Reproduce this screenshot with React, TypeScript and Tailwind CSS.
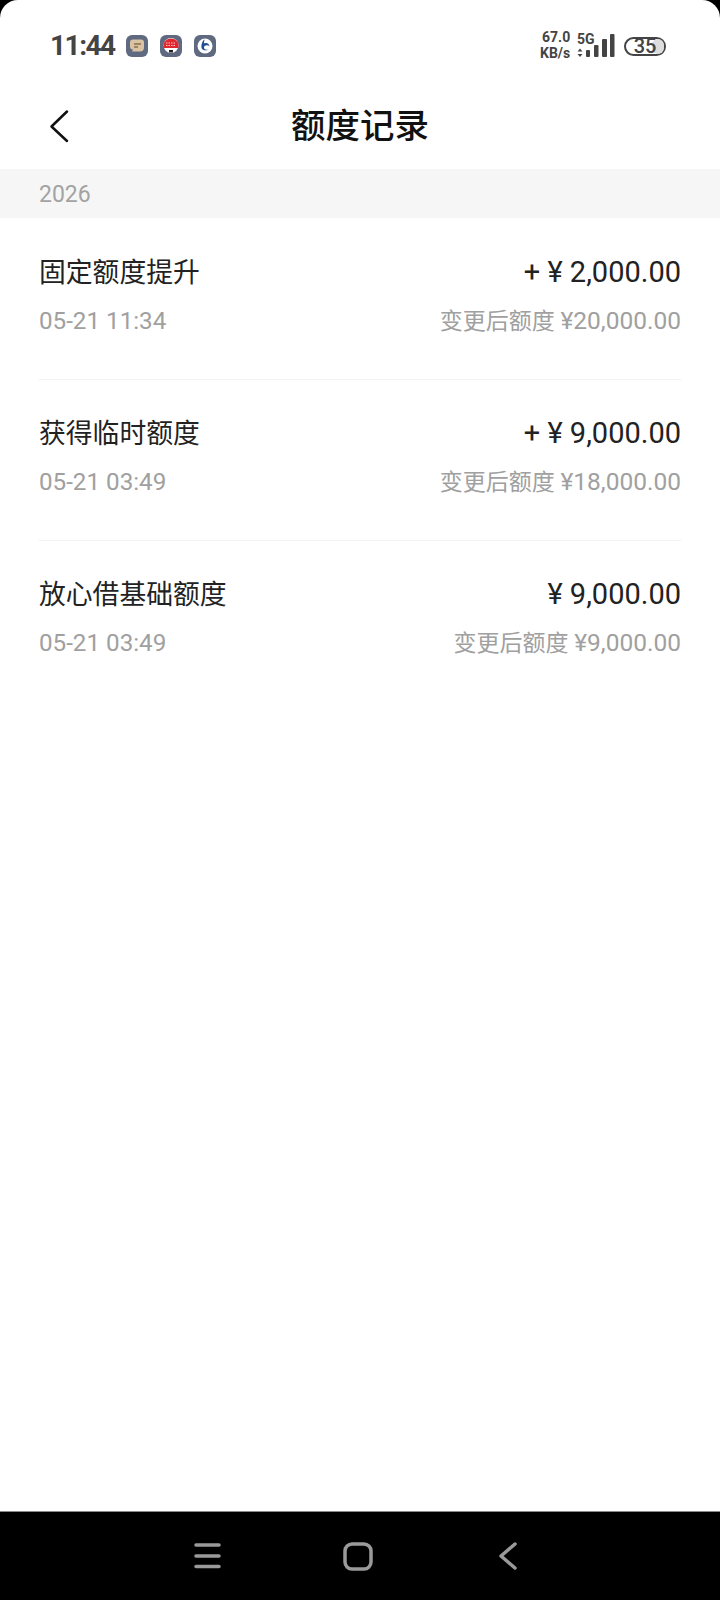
import React from 'react';

const records = [
  { title: '固定额度提升', time: '05-21 11:34', amount: '+ ¥ 2,000.00', after: '¥20,000.00' },
  { title: '获得临时额度', time: '05-21 03:49', amount: '+ ¥ 9,000.00', after: '¥18,000.00' },
  { title: '放心借基础额度', time: '05-21 03:49', amount: '¥ 9,000.00', after: '¥9,000.00' },
];

const NoteIcon = () => (
  <svg viewBox="0 0 22 22" className="w-[22px] h-[22px]">
    <rect width="22" height="22" rx="6" fill="#5f6980" />
    <path d="M7 4.500h8a3 3 0 0 1 3 3v5a4 4 0 0 1-4 4H6l1-2a3 3 0 0 1-3-3v-4a3 3 0 0 1 3-3z" fill="#d9c3a3" />
    <path d="M8 9h7M8 12h4" stroke="#8a6f4d" strokeWidth="1.5" />
  </svg>
);

const BadgeIcon = () => (
  <svg viewBox="0 0 22 22" className="w-[22px] h-[22px]">
    <rect width="22" height="22" rx="6" fill="#5f6980" />
    <circle cx="11" cy="10.500" r="7.500" fill="#ffffff" />
    <path d="M3.500 10a7.500 6.500 0 0 1 15 0v3h-15z" fill="#e3262e" />
    <path d="M6 8h10M6 10.500h10" stroke="#f8c9c9" strokeWidth="1" strokeDasharray="1.5 1" />
    <rect x="9" y="15" width="4" height="2.500" fill="#222222" />
  </svg>
);

const SwirlIcon = () => (
  <svg viewBox="0 0 22 22" className="w-[22px] h-[22px]">
    <rect width="22" height="22" rx="6" fill="#5f6980" />
    <circle cx="11" cy="11" r="7.500" fill="#ffffff" />
    <path d="M10 4.500C8 7 7 10 7.500 13c1 2.500 4.500 3 7 1.500-2.500.5-4.500 0-4.500-2 0-2 3-3 5.500-1.500C15 8.500 12.500 7.500 10 8.500c0-1.500.2-2.500.5-3.500z" fill="#1f4f93" />
  </svg>
);

const App: React.FC = () => {
  return (
    <div className="w-[720px] h-[1600px] bg-black flex flex-col font-['Roboto','Noto_Sans_CJK_SC',sans-serif]">
      <div className="flex-1 bg-white rounded-t-[18px] flex flex-col">
        {/* status bar */}
        <div className="h-[80px] pt-[26px] pl-[50px] pr-[54px] flex items-start justify-between">
          <div className="flex items-center h-[40px]">
            <span className="text-[28px] leading-none font-bold text-[#444444] tracking-[-1.5px] w-[76px]">11:44</span>
            <div className="flex items-center gap-[12px]">
              <NoteIcon />
              <BadgeIcon />
              <SwirlIcon />
            </div>
          </div>
          <div className="flex items-center h-[40px] text-[#444444]">
            <div className="flex flex-col items-start text-[14px] leading-[16px] font-bold w-[36px] -mt-[2px]">
              <span className="pl-[2px]">67.0</span>
              <span>KB/s</span>
            </div>
            <div className="relative w-[40px] h-[30px]">
              <span className="absolute left-[1px] top-0 text-[14px] leading-[16px] font-bold">5G</span>
              <svg viewBox="0 -2 40 30" className="w-[40px] h-[30px]">
                <path d="M1.500 18.500L4 15.500 6.500 18.500zM1.500 21L4 24 6.500 21z" fill="#444444" />
                <rect x="10" y="17" width="4" height="7" rx="1" fill="#444444" />
                <rect x="18" y="12" width="4.500" height="12" rx="1" fill="#444444" />
                <rect x="26" y="6" width="5" height="18" rx="1" fill="#444444" />
                <rect x="34" y="1" width="4.500" height="23" rx="1" fill="#444444" />
              </svg>
            </div>
            <div className="relative ml-[8px] w-[42px] h-[19px] rounded-full border-2 border-[#444444] flex items-center justify-center">
              <div className="absolute right-0 top-0 bottom-0 w-[12px] bg-[#dddddd] rounded-full" />
              <span className="relative text-[20px] leading-none font-medium">35</span>
            </div>
          </div>
        </div>

        {/* nav */}
        <div className="h-[89px] relative flex items-center justify-center">
          <svg viewBox="0 0 20 34" className="absolute left-[49px] top-[29px] w-[20px] h-[34px]" fill="none" stroke="#111111" strokeWidth="2.5" strokeLinecap="round" strokeLinejoin="round">
            <path d="M18 2.500L2.500 17.500 18 32" />
          </svg>
          <h1 className="text-[34.5px] leading-none font-medium text-[#111111] mt-[4px]">额度记录</h1>
        </div>

        <div className="h-[49px] bg-[#f6f6f6] pl-[39px] flex items-center text-[23px] text-[#a3a3a3]">
          <span className="mt-[4px]">2026</span>
        </div>

        <div className="flex-1 px-[39px] pt-px">
          {records.map((record, i) => (
            <div key={i} className={`h-[161px] pt-[36px] ${i < records.length - 1 ? 'border-b border-[#f3f3f3]' : ''}`}>
              <div className="flex justify-between items-center h-[36px]">
                <span className="text-[26.8px] text-[#222222]">{record.title}</span>
                <span className="text-[29px] text-[#222222]">{record.amount}</span>
              </div>
              <div className="flex justify-between items-center h-[36px] mt-[12px]">
                <span className="text-[24.2px] text-[#a0a0a0]">{record.time}</span>
                <span className="text-[24.5px] text-[#a0a0a0]">
                  <span className="text-[23px]">变更后额度 </span>
                  {record.after}
                </span>
              </div>
            </div>
          ))}
        </div>

        {/* system nav bar */}
        <div className="h-[89px] bg-black border-t border-[#8a8a8a] flex items-start justify-center">
          <svg viewBox="0 0 400 88" className="w-[400px] h-[88px]" fill="none" stroke="#9a9a9a" strokeWidth="3.5" strokeLinecap="round" strokeLinejoin="round">
            <path d="M36 33h23M36 44h23M36 54.500h23" />
            <rect x="185" y="32" width="26" height="25" rx="7" />
            <path d="M355 32L341 44 355 56" />
          </svg>
        </div>
      </div>
    </div>
  );
};

export default App;
